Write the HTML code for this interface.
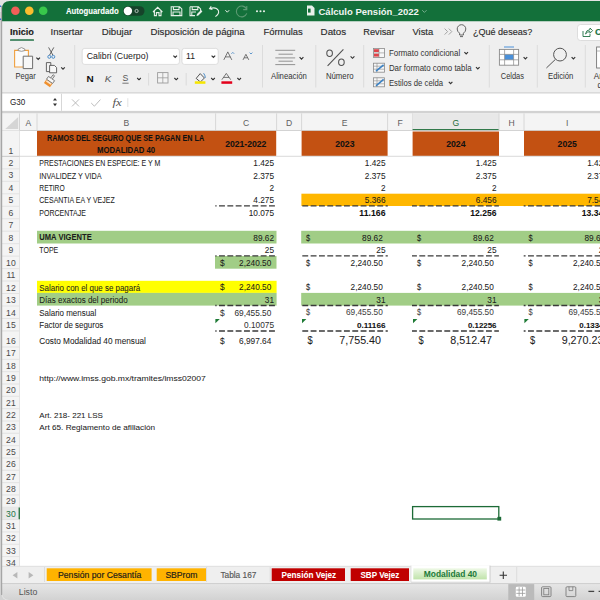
<!DOCTYPE html>
<html><head><meta charset="utf-8"><style>
html,body{margin:0;padding:0;width:600px;height:600px;overflow:hidden;background:#d2d2d2;}
svg{display:block;}
</style></head><body>
<svg width="600" height="600" viewBox="0 0 600 600">
<rect x="0.00" y="0.00" width="600.00" height="600.00" fill="#d2d2d2" />
<rect x="0.00" y="0.00" width="600.00" height="12.00" fill="#e4e4e4" />
<rect x="0.00" y="5.50" width="1.20" height="1.50" fill="#3b6fd8" />
<rect x="0.00" y="18.50" width="1.20" height="1.50" fill="#3b6fd8" />
<path d="M2,9 Q2,1 10,1 L600,1 L600,600 L8,600 Q2,600 2,594 Z" stroke="none" fill="#efefef" stroke-width="1" />
<path d="M2,9 Q2,1 10,1 L600,1 L600,21.3 L2,21.3 Z" stroke="none" fill="#13703a" stroke-width="1" />
<circle cx="15.4" cy="10.7" r="4.3" fill="#f25f58"/>
<circle cx="29.3" cy="10.7" r="4.3" fill="#fbbd2e"/>
<circle cx="43.2" cy="10.7" r="4.3" fill="#38c84b"/>
<text x="66.00" y="14.20" font-size="8.6" font-weight="bold" textLength="52.60" lengthAdjust="spacingAndGlyphs" fill="#ffffff" stroke="#ffffff" stroke-width="0.1" font-family="Liberation Sans" >Autoguardado</text>
<rect x="123.00" y="6.20" width="21.50" height="9.60" fill="#16432a" rx="4.8" />
<circle cx="127.9" cy="11" r="4.2" fill="#ffffff"/>
<circle cx="136.6" cy="11" r="1.6" fill="none" stroke="#cfd8d2" stroke-width="0.8"/>
<path d="M153,12 L157.7,7.3 L162.4,12 M154.4,10.8 L154.4,15.6 L156.4,15.6 L156.4,12.6 L159,12.6 L159,15.6 L161,15.6 L161,10.8" stroke="#e8f0ea" fill="none" stroke-width="1.1" />
<path d="M171.2,6.8 L179.6,6.8 L181.8,9 L181.8,15.6 L171.2,15.6 Z M173.4,6.8 L173.4,9.6 L179,9.6 L179,6.8 M173,15.6 L173,12 L180,12 L180,15.6" stroke="#e8f0ea" fill="none" stroke-width="1.05" />
<path d="M190,6.8 L198.4,6.8 L200.6,9 L200.6,11.5 M190,6.8 L190,15.6 L195,15.6 M192.2,6.8 L192.2,9.6 L197.8,9.6 L197.8,6.8 M191.8,15.6 L191.8,12 L196,12" stroke="#e8f0ea" fill="none" stroke-width="1.05" />
<path d="M196.5,16 L197,14 L201,10 L202.4,11.4 L198.4,15.4 Z" stroke="none" fill="#e8f0ea" stroke-width="1" />
<path d="M211.2,6.2 L209.6,8.6 L212.4,9.6 M209.8,8.6 Q216,6.4 218.4,10.6 Q219.6,13.6 215.4,16.6" stroke="#e8f0ea" fill="none" stroke-width="1.1" />
<path d="M225.4,10.2 L227.3,12.2 L229.2,10.2" stroke="#e8f0ea" fill="none" stroke-width="1" />
<path d="M246.6,9 A5.4,5.4 0 1 0 246.8,13.4 M246.8,6 L246.8,9.6 L243.2,9.6" stroke="#5d9a73" fill="none" stroke-width="1.1" />
<circle cx="257" cy="11.2" r="1.05" fill="#e8f0ea"/>
<circle cx="260.5" cy="11.2" r="1.05" fill="#e8f0ea"/>
<circle cx="264" cy="11.2" r="1.05" fill="#e8f0ea"/>
<path d="M307,5.5 L312,5.5 L314.5,8 L314.5,15.5 L307,15.5 Z" stroke="none" fill="#e8f0ea" stroke-width="1" />
<path d="M308,8.6 L310.6,8.6 L310.6,12.6 L308,12.6 Z" stroke="none" fill="#13703a" stroke-width="1" />
<text x="318.50" y="14.70" font-size="9.6" font-weight="bold" textLength="100.30" lengthAdjust="spacingAndGlyphs" fill="#f1f5f2" font-family="Liberation Sans" >Cálculo Pensión_2022</text>
<path d="M422.2,10.2 L424.4,12.4 L426.6,10.2" stroke="#7fb394" fill="none" stroke-width="0.9" />
<text x="10.00" y="35.20" font-size="9.3" font-weight="bold" textLength="23.90" lengthAdjust="spacingAndGlyphs" fill="#1b1b1b" stroke="#1b1b1b" stroke-width="0.14" font-family="Liberation Sans" >Inicio</text>
<rect x="10.00" y="39.20" width="24.00" height="1.60" fill="#207245" rx="0.6" />
<text x="50.50" y="35.20" font-size="9.3" textLength="32.50" lengthAdjust="spacingAndGlyphs" fill="#2b2b2b" stroke="#2b2b2b" stroke-width="0.14" font-family="Liberation Sans" >Insertar</text>
<text x="101.70" y="35.20" font-size="9.3" textLength="30.50" lengthAdjust="spacingAndGlyphs" fill="#2b2b2b" stroke="#2b2b2b" stroke-width="0.14" font-family="Liberation Sans" >Dibujar</text>
<text x="150.50" y="35.20" font-size="9.3" textLength="94.20" lengthAdjust="spacingAndGlyphs" fill="#2b2b2b" stroke="#2b2b2b" stroke-width="0.14" font-family="Liberation Sans" >Disposición de página</text>
<text x="263.40" y="35.20" font-size="9.3" textLength="39.30" lengthAdjust="spacingAndGlyphs" fill="#2b2b2b" stroke="#2b2b2b" stroke-width="0.14" font-family="Liberation Sans" >Fórmulas</text>
<text x="320.60" y="35.20" font-size="9.3" textLength="25.60" lengthAdjust="spacingAndGlyphs" fill="#2b2b2b" stroke="#2b2b2b" stroke-width="0.14" font-family="Liberation Sans" >Datos</text>
<text x="363.20" y="35.20" font-size="9.3" textLength="31.40" lengthAdjust="spacingAndGlyphs" fill="#2b2b2b" stroke="#2b2b2b" stroke-width="0.14" font-family="Liberation Sans" >Revisar</text>
<text x="412.50" y="35.20" font-size="9.3" textLength="20.70" lengthAdjust="spacingAndGlyphs" fill="#2b2b2b" stroke="#2b2b2b" stroke-width="0.14" font-family="Liberation Sans" >Vista</text>
<path d="M444.6,28.6 L447.6,31.6 L444.6,34.6 M448.8,28.6 L451.8,31.6 L448.8,34.6" stroke="#9a9a9a" fill="none" stroke-width="0.9" />
<path d="M459.6,35 L459.6,33.2 Q457.2,31.6 457.2,29 A4.3,4.3 0 0 1 465.8,29 Q465.8,31.6 463.4,33.2 L463.4,35 Z M460,36.6 L463,36.6" stroke="#555" fill="none" stroke-width="0.9" />
<text x="472.90" y="35.20" font-size="9.3" textLength="59.40" lengthAdjust="spacingAndGlyphs" fill="#2b2b2b" stroke="#2b2b2b" stroke-width="0.14" font-family="Liberation Sans" >¿Qué deseas?</text>
<rect x="577.50" y="24.50" width="40.00" height="16.00" fill="#ffffff" rx="3" stroke="#d5d5d5" stroke-width="0.8" />
<path d="M583,31 L583,36.5 L590,36.5 L590,34 M585.5,34 Q586,30 590,29.6 L590,28 L592.6,30.6 L590,33.2 L590,31.6 Q587,31.6 585.5,34" stroke="#207245" fill="none" stroke-width="0.9" />
<text x="595.00" y="35.40" font-size="9.3" font-weight="bold" fill="#207245" stroke="#207245" stroke-width="0.14" font-family="Liberation Sans" >C</text>
<line x1="74.70" y1="45.00" x2="74.70" y2="87.50" stroke="#d9d9d9" stroke-width="0.9" />
<line x1="262.50" y1="45.00" x2="262.50" y2="87.50" stroke="#d9d9d9" stroke-width="0.9" />
<line x1="315.80" y1="45.00" x2="315.80" y2="87.50" stroke="#d9d9d9" stroke-width="0.9" />
<line x1="363.70" y1="45.00" x2="363.70" y2="87.50" stroke="#d9d9d9" stroke-width="0.9" />
<line x1="489.30" y1="45.00" x2="489.30" y2="87.50" stroke="#d9d9d9" stroke-width="0.9" />
<line x1="537.30" y1="45.00" x2="537.30" y2="87.50" stroke="#d9d9d9" stroke-width="0.9" />
<line x1="585.30" y1="45.00" x2="585.30" y2="87.50" stroke="#d9d9d9" stroke-width="0.9" />
<path d="M14.6,50.4 L28.4,50.4 L28.4,67 L14.6,67 Z" stroke="#f0a040" fill="#fbfbfb" stroke-width="1.1" />
<path d="M18.2,50.6 L18.2,49 Q21.5,46.2 24.8,49 L24.8,50.6 Q21.5,52 18.2,50.6" stroke="#8a8a8a" fill="#fbfbfb" stroke-width="0.9" />
<path d="M23.2,56.2 L32.6,56.2 L32.6,68.6 L23.2,68.6 Z" stroke="#6f6f6f" fill="#f7f7f7" stroke-width="1" />
<path d="M36.4,57.6 L38.2,59.4 L40,57.6" stroke="#333" fill="none" stroke-width="1.15" />
<text x="15.60" y="78.50" font-size="8.2" textLength="20.10" lengthAdjust="spacingAndGlyphs" fill="#333" font-family="Liberation Sans" >Pegar</text>
<path d="M48.6,47.4 L52.8,55 M53.8,47.4 L49.6,55" stroke="#555" fill="none" stroke-width="0.9" />
<circle cx="49.3" cy="56.8" r="1.5" fill="none" stroke="#3b82c4" stroke-width="0.9"/>
<circle cx="53.3" cy="56.8" r="1.5" fill="none" stroke="#3b82c4" stroke-width="0.9"/>
<path d="M46.4,62.6 L50.8,62.6 L50.8,71.6 L46.4,71.6 Z" stroke="#555" fill="#f3f3f3" stroke-width="0.9" />
<path d="M49.6,65.4 L54.4,65.4 L56.6,67.6 L56.6,72.8 L49.6,72.8 Z" stroke="#555" fill="#f7f7f7" stroke-width="0.9" />
<path d="M61.2,67.4 L63,69.2 L64.8,67.4" stroke="#333" fill="none" stroke-width="1.15" />
<g transform="translate(50.8,82.2) rotate(35)"><path d="M-5.2,0 L2.2,0 L2.2,4.6 L-5.2,4.6 Z" fill="#f0902e"/><path d="M-4.4,0.4 L1.4,0.4 L1.4,2.2 L-4.4,2.2 Z" fill="#fbe3c8"/><path d="M-5.2,-3.4 L2.2,-3.4 L2.2,0 L-5.2,0 Z" fill="#f7f7f7" stroke="#6a6a6a" stroke-width="0.8"/><path d="M-2.4,-3.4 L-2.4,-7.4 L-0.6,-7.4 L-0.6,-3.4" fill="#f7f7f7" stroke="#6a6a6a" stroke-width="0.8"/></g>
<rect x="82.20" y="48.40" width="97.20" height="16.00" fill="#ffffff" rx="2.5" stroke="#d3d3d3" stroke-width="0.7" />
<text x="86.70" y="59.40" font-size="8.6" textLength="61.80" lengthAdjust="spacingAndGlyphs" fill="#222" font-family="Liberation Sans" >Calibri (Cuerpo)</text>
<path d="M173.4,55.6 L175.2,57.4 L177,55.6" stroke="#333" fill="none" stroke-width="1.15" />
<rect x="182.00" y="48.40" width="36.20" height="16.00" fill="#ffffff" rx="2.5" stroke="#d3d3d3" stroke-width="0.7" />
<text x="186.00" y="59.40" font-size="8.6" fill="#222" font-family="Liberation Sans" >11</text>
<path d="M211.6,55.6 L213.4,57.4 L215.2,55.6" stroke="#333" fill="none" stroke-width="1.15" />
<path d="M223.8,59.9 L227.8,51.9 L231.8,59.9 M225.3,56.9 L230.3,56.9" stroke="#555" fill="none" stroke-width="0.8" />
<path d="M231.4,53.8 L232.8,52.4 L234.2,53.8" stroke="#3b82c4" fill="none" stroke-width="0.8" />
<path d="M243,59.9 L245.9,54.3 L248.8,59.9 M244.1,57.8 L247.7,57.8" stroke="#555" fill="none" stroke-width="0.8" />
<path d="M249.6,52.6 L251,54 L252.4,52.6" stroke="#3b82c4" fill="none" stroke-width="0.8" />
<text x="86.60" y="81.60" font-size="9.4" font-weight="bold" textLength="7.20" lengthAdjust="spacingAndGlyphs" fill="#111" font-family="Liberation Sans" >N</text>
<text x="104.80" y="81.60" font-size="9.4" textLength="6.60" lengthAdjust="spacingAndGlyphs" fill="#555" font-family="Liberation Sans" font-style="italic">K</text>
<text x="122.60" y="80.60" font-size="9.0" textLength="5.80" lengthAdjust="spacingAndGlyphs" fill="#555" font-family="Liberation Sans" >S</text>
<line x1="122.40" y1="83.20" x2="128.60" y2="83.20" stroke="#555" stroke-width="0.8" />
<path d="M137.2,78 L139,79.8 L140.8,78" stroke="#333" fill="none" stroke-width="1.15" />
<line x1="148.60" y1="73.00" x2="148.60" y2="85.50" stroke="#d9d9d9" stroke-width="0.9" />
<rect x="157.60" y="72.60" width="10.40" height="10.40" fill="#f3f3f3" stroke="#9c9c9c" stroke-width="0.9" />
<line x1="162.80" y1="72.60" x2="162.80" y2="83.00" stroke="#9c9c9c" stroke-width="0.8" />
<line x1="157.60" y1="77.80" x2="168.00" y2="77.80" stroke="#9c9c9c" stroke-width="0.8" />
<path d="M174.4,78 L176.2,79.8 L178,78" stroke="#333" fill="none" stroke-width="1.15" />
<line x1="186.20" y1="73.00" x2="186.20" y2="85.50" stroke="#d9d9d9" stroke-width="0.9" />
<path d="M196.2,78.4 L200.2,73.6 L204.4,78 L200.4,82 Z" stroke="#444" fill="#f3f3f3" stroke-width="0.9" />
<path d="M203.6,73.2 Q205.6,76 205.2,78" stroke="#3b82c4" fill="none" stroke-width="0.9" />
<rect x="194.80" y="81.30" width="10.60" height="2.50" fill="#f6e600" />
<path d="M211.2,78 L213,79.8 L214.8,78" stroke="#333" fill="none" stroke-width="1.15" />
<path d="M221.9,79.7 L226.3,73.4 L230.7,79.7 M223.5,77.4 L229.1,77.4" stroke="#555" fill="none" stroke-width="0.8" />
<rect x="221.40" y="81.30" width="10.80" height="2.50" fill="#e3001b" />
<path d="M237.4,78 L239.2,79.8 L241,78" stroke="#333" fill="none" stroke-width="1.15" />
<line x1="275.30" y1="50.30" x2="295.20" y2="50.30" stroke="#888" stroke-width="0.9" />
<line x1="278.50" y1="54.20" x2="292.80" y2="54.20" stroke="#888" stroke-width="0.9" />
<line x1="275.30" y1="57.90" x2="295.20" y2="57.90" stroke="#888" stroke-width="0.9" />
<line x1="278.50" y1="61.20" x2="292.80" y2="61.20" stroke="#888" stroke-width="0.9" />
<line x1="275.30" y1="64.60" x2="295.20" y2="64.60" stroke="#888" stroke-width="0.9" />
<path d="M299.6,57.2 L301.5,59.1 L303.4,57.2" stroke="#333" fill="none" stroke-width="1.15" />
<text x="271.00" y="78.80" font-size="8.2" textLength="35.80" lengthAdjust="spacingAndGlyphs" fill="#333" font-family="Liberation Sans" >Alineación</text>
<ellipse cx="329.6" cy="53.2" rx="2.8" ry="3.2" fill="none" stroke="#505050" stroke-width="1.05"/>
<ellipse cx="341.4" cy="62.2" rx="2.8" ry="3.2" fill="none" stroke="#505050" stroke-width="1.05"/>
<line x1="343.40" y1="49.40" x2="327.60" y2="65.80" stroke="#505050" stroke-width="1.05" />
<path d="M350.6,56.4 L352.5,58.3 L354.4,56.4" stroke="#333" fill="none" stroke-width="1.15" />
<text x="325.90" y="78.80" font-size="8.2" textLength="27.70" lengthAdjust="spacingAndGlyphs" fill="#333" font-family="Liberation Sans" >Número</text>
<rect x="373.40" y="48.40" width="11.00" height="9.00" fill="#f7f7f7" stroke="#8a8a8a" stroke-width="0.8" />
<rect x="374.00" y="49.20" width="5.00" height="2.80" fill="#e0444a" />
<rect x="374.00" y="53.60" width="5.00" height="3.00" fill="#e0444a" />
<line x1="373.40" y1="52.90" x2="384.40" y2="52.90" stroke="#8a8a8a" stroke-width="0.6" />
<line x1="379.00" y1="48.40" x2="379.00" y2="57.40" stroke="#8a8a8a" stroke-width="0.6" />
<rect x="373.40" y="63.20" width="11.00" height="9.00" fill="#f7f7f7" stroke="#8a8a8a" stroke-width="0.8" />
<line x1="373.40" y1="66.20" x2="384.40" y2="66.20" stroke="#8a8a8a" stroke-width="0.6" />
<line x1="373.40" y1="69.20" x2="384.40" y2="69.20" stroke="#8a8a8a" stroke-width="0.6" />
<line x1="377.00" y1="63.20" x2="377.00" y2="72.20" stroke="#8a8a8a" stroke-width="0.6" />
<path d="M376,71.2 L383.6,64.8" stroke="#3b82c4" fill="none" stroke-width="1.6" />
<rect x="373.40" y="77.80" width="11.00" height="9.00" fill="#f7f7f7" stroke="#8a8a8a" stroke-width="0.8" />
<line x1="373.40" y1="80.80" x2="384.40" y2="80.80" stroke="#8a8a8a" stroke-width="0.6" />
<line x1="373.40" y1="83.80" x2="384.40" y2="83.80" stroke="#8a8a8a" stroke-width="0.6" />
<line x1="377.00" y1="77.80" x2="377.00" y2="86.80" stroke="#8a8a8a" stroke-width="0.6" />
<path d="M376,85.8 L383.6,79.39999999999999" stroke="#3b82c4" fill="none" stroke-width="1.6" />
<text x="388.90" y="55.80" font-size="8.2" textLength="71.30" lengthAdjust="spacingAndGlyphs" fill="#333" font-family="Liberation Sans" >Formato condicional</text>
<path d="M464.4,52.2 L466.2,54 L468,52.2" stroke="#333" fill="none" stroke-width="1.15" />
<text x="388.90" y="71.00" font-size="8.2" textLength="82.70" lengthAdjust="spacingAndGlyphs" fill="#333" font-family="Liberation Sans" >Dar formato como tabla</text>
<path d="M476,67.2 L477.8,69 L479.6,67.2" stroke="#333" fill="none" stroke-width="1.15" />
<text x="388.90" y="85.80" font-size="8.2" textLength="54.10" lengthAdjust="spacingAndGlyphs" fill="#333" font-family="Liberation Sans" >Estilos de celda</text>
<path d="M448.8,81.8 L450.6,83.6 L452.4,81.8" stroke="#333" fill="none" stroke-width="1.15" />
<rect x="499.40" y="49.40" width="19.20" height="15.80" fill="#ffffff" stroke="#8a8a8a" stroke-width="0.9" />
<rect x="504.60" y="54.40" width="9.00" height="5.40" fill="#4a90d9" />
<line x1="499.40" y1="54.40" x2="518.60" y2="54.40" stroke="#8a8a8a" stroke-width="0.7" />
<line x1="499.40" y1="59.80" x2="518.60" y2="59.80" stroke="#8a8a8a" stroke-width="0.7" />
<line x1="504.60" y1="49.40" x2="504.60" y2="65.20" stroke="#8a8a8a" stroke-width="0.7" />
<line x1="513.60" y1="49.40" x2="513.60" y2="65.20" stroke="#8a8a8a" stroke-width="0.7" />
<line x1="504.00" y1="47.00" x2="514.00" y2="47.00" stroke="#4a90d9" stroke-width="1" />
<path d="M523.6,57.2 L525.4,59 L527.2,57.2" stroke="#333" fill="none" stroke-width="1.15" />
<text x="500.80" y="78.80" font-size="8.2" textLength="23.20" lengthAdjust="spacingAndGlyphs" fill="#333" font-family="Liberation Sans" >Celdas</text>
<circle cx="560" cy="54.6" r="6.4" fill="none" stroke="#555" stroke-width="1"/>
<line x1="555.40" y1="59.40" x2="546.40" y2="68.00" stroke="#555" stroke-width="1" />
<path d="M571.6,57.2 L573.4,59 L575.2,57.2" stroke="#333" fill="none" stroke-width="1.15" />
<text x="548.00" y="78.80" font-size="8.2" textLength="25.30" lengthAdjust="spacingAndGlyphs" fill="#333" font-family="Liberation Sans" >Edición</text>
<rect x="596.60" y="47.00" width="14.00" height="21.00" fill="#ffffff" stroke="#777" stroke-width="0.9" />
<line x1="596.60" y1="51.00" x2="604.00" y2="51.00" stroke="#999" stroke-width="0.7" />
<text x="593.80" y="78.80" font-size="8.2" fill="#333" font-family="Liberation Sans" >An</text>
<text x="597.40" y="87.60" font-size="8.2" fill="#333" font-family="Liberation Sans" >d</text>
<rect x="2.00" y="92.00" width="598.00" height="1.70" fill="#dadada" />
<rect x="2.00" y="93.70" width="598.00" height="17.20" fill="#ffffff" />
<line x1="61.50" y1="93.70" x2="61.50" y2="110.90" stroke="#d3d3d3" stroke-width="0.9" />
<text x="9.90" y="104.80" font-size="8.4" textLength="15.30" lengthAdjust="spacingAndGlyphs" fill="#222" font-family="Liberation Sans" >G30</text>
<path d="M53,100.6 L55,98 L57,100.6 Z M53,103.6 L55,106.2 L57,103.6 Z" stroke="none" fill="#333" stroke-width="1" />
<path d="M72,99.4 L79,106.4 M79,99.4 L72,106.4" stroke="#b4b4b4" fill="none" stroke-width="0.9" />
<path d="M91.2,103 L94.4,106.2 L100.4,99.6" stroke="#b4b4b4" fill="none" stroke-width="0.9" />
<text x="112.40" y="106.00" font-size="10.4" textLength="9.40" lengthAdjust="spacingAndGlyphs" fill="#555" font-family="Liberation Serif" font-style="italic">fx</text>
<line x1="127.80" y1="98.20" x2="127.80" y2="107.00" stroke="#dadada" stroke-width="0.8" />
<rect x="2.00" y="110.90" width="598.00" height="2.50" fill="#d2d2d2" />
<rect x="19.50" y="130.50" width="580.50" height="435.50" fill="#ffffff" />
<rect x="2.00" y="113.40" width="598.00" height="17.10" fill="#f4f4f4" />
<line x1="37.00" y1="113.40" x2="37.00" y2="130.50" stroke="#d4d4d4" stroke-width="0.9" />
<text x="28.25" y="125.50" font-size="8.6" text-anchor="middle" fill="#606060" font-family="Liberation Sans" >A</text>
<line x1="215.60" y1="113.40" x2="215.60" y2="130.50" stroke="#d4d4d4" stroke-width="0.9" />
<text x="126.30" y="125.50" font-size="8.6" text-anchor="middle" fill="#606060" font-family="Liberation Sans" >B</text>
<line x1="276.60" y1="113.40" x2="276.60" y2="130.50" stroke="#d4d4d4" stroke-width="0.9" />
<text x="246.10" y="125.50" font-size="8.6" text-anchor="middle" fill="#606060" font-family="Liberation Sans" >C</text>
<line x1="301.60" y1="113.40" x2="301.60" y2="130.50" stroke="#d4d4d4" stroke-width="0.9" />
<text x="289.10" y="125.50" font-size="8.6" text-anchor="middle" fill="#606060" font-family="Liberation Sans" >D</text>
<line x1="387.60" y1="113.40" x2="387.60" y2="130.50" stroke="#d4d4d4" stroke-width="0.9" />
<text x="344.60" y="125.50" font-size="8.6" text-anchor="middle" fill="#606060" font-family="Liberation Sans" >E</text>
<line x1="412.60" y1="113.40" x2="412.60" y2="130.50" stroke="#d4d4d4" stroke-width="0.9" />
<text x="400.10" y="125.50" font-size="8.6" text-anchor="middle" fill="#606060" font-family="Liberation Sans" >F</text>
<rect x="412.60" y="113.40" width="86.40" height="17.10" fill="#e8e8e8" />
<rect x="412.60" y="129.10" width="86.40" height="1.80" fill="#1d6d39" />
<line x1="499.00" y1="113.40" x2="499.00" y2="130.50" stroke="#d4d4d4" stroke-width="0.9" />
<text x="455.80" y="125.50" font-size="8.6" text-anchor="middle" fill="#1d6d39" font-family="Liberation Sans" >G</text>
<line x1="524.00" y1="113.40" x2="524.00" y2="130.50" stroke="#d4d4d4" stroke-width="0.9" />
<text x="511.50" y="125.50" font-size="8.6" text-anchor="middle" fill="#606060" font-family="Liberation Sans" >H</text>
<line x1="610.40" y1="113.40" x2="610.40" y2="130.50" stroke="#d4d4d4" stroke-width="0.9" />
<text x="567.20" y="125.50" font-size="8.6" text-anchor="middle" fill="#606060" font-family="Liberation Sans" >I</text>
<line x1="2.00" y1="130.50" x2="600.00" y2="130.50" stroke="#cfcfcf" stroke-width="0.9" />
<line x1="19.50" y1="113.40" x2="19.50" y2="566.00" stroke="#cfcfcf" stroke-width="0.9" />
<path d="M5.2,129 L18.2,129 L18.2,117 Z" stroke="none" fill="#d5d5d5" stroke-width="1" />
<rect x="2.00" y="130.50" width="17.50" height="435.50" fill="#f4f4f4" />
<line x1="2.00" y1="156.40" x2="19.50" y2="156.40" stroke="#dedede" stroke-width="0.8" />
<text x="10.90" y="153.60" font-size="8.6" text-anchor="middle" fill="#4a4a4a" font-family="Liberation Sans" >1</text>
<line x1="2.00" y1="168.86" x2="19.50" y2="168.86" stroke="#dedede" stroke-width="0.8" />
<text x="10.90" y="165.96" font-size="8.6" text-anchor="middle" fill="#4a4a4a" font-family="Liberation Sans" >2</text>
<line x1="2.00" y1="181.33" x2="19.50" y2="181.33" stroke="#dedede" stroke-width="0.8" />
<text x="10.90" y="178.43" font-size="8.6" text-anchor="middle" fill="#4a4a4a" font-family="Liberation Sans" >3</text>
<line x1="2.00" y1="193.79" x2="19.50" y2="193.79" stroke="#dedede" stroke-width="0.8" />
<text x="10.90" y="190.89" font-size="8.6" text-anchor="middle" fill="#4a4a4a" font-family="Liberation Sans" >4</text>
<line x1="2.00" y1="206.26" x2="19.50" y2="206.26" stroke="#dedede" stroke-width="0.8" />
<text x="10.90" y="203.36" font-size="8.6" text-anchor="middle" fill="#4a4a4a" font-family="Liberation Sans" >5</text>
<line x1="2.00" y1="218.72" x2="19.50" y2="218.72" stroke="#dedede" stroke-width="0.8" />
<text x="10.90" y="215.82" font-size="8.6" text-anchor="middle" fill="#4a4a4a" font-family="Liberation Sans" >6</text>
<line x1="2.00" y1="231.19" x2="19.50" y2="231.19" stroke="#dedede" stroke-width="0.8" />
<text x="10.90" y="228.29" font-size="8.6" text-anchor="middle" fill="#4a4a4a" font-family="Liberation Sans" >7</text>
<line x1="2.00" y1="243.65" x2="19.50" y2="243.65" stroke="#dedede" stroke-width="0.8" />
<text x="10.90" y="240.75" font-size="8.6" text-anchor="middle" fill="#4a4a4a" font-family="Liberation Sans" >8</text>
<line x1="2.00" y1="256.11" x2="19.50" y2="256.11" stroke="#dedede" stroke-width="0.8" />
<text x="10.90" y="253.21" font-size="8.6" text-anchor="middle" fill="#4a4a4a" font-family="Liberation Sans" >9</text>
<line x1="2.00" y1="268.58" x2="19.50" y2="268.58" stroke="#dedede" stroke-width="0.8" />
<text x="10.90" y="265.68" font-size="8.6" text-anchor="middle" fill="#4a4a4a" font-family="Liberation Sans" >10</text>
<line x1="2.00" y1="281.04" x2="19.50" y2="281.04" stroke="#dedede" stroke-width="0.8" />
<text x="10.90" y="278.14" font-size="8.6" text-anchor="middle" fill="#4a4a4a" font-family="Liberation Sans" >11</text>
<line x1="2.00" y1="293.51" x2="19.50" y2="293.51" stroke="#dedede" stroke-width="0.8" />
<text x="10.90" y="290.61" font-size="8.6" text-anchor="middle" fill="#4a4a4a" font-family="Liberation Sans" >12</text>
<line x1="2.00" y1="305.97" x2="19.50" y2="305.97" stroke="#dedede" stroke-width="0.8" />
<text x="10.90" y="303.07" font-size="8.6" text-anchor="middle" fill="#4a4a4a" font-family="Liberation Sans" >13</text>
<line x1="2.00" y1="318.44" x2="19.50" y2="318.44" stroke="#dedede" stroke-width="0.8" />
<text x="10.90" y="315.54" font-size="8.6" text-anchor="middle" fill="#4a4a4a" font-family="Liberation Sans" >14</text>
<line x1="2.00" y1="330.90" x2="19.50" y2="330.90" stroke="#dedede" stroke-width="0.8" />
<text x="10.90" y="328.00" font-size="8.6" text-anchor="middle" fill="#4a4a4a" font-family="Liberation Sans" >15</text>
<line x1="2.00" y1="347.00" x2="19.50" y2="347.00" stroke="#dedede" stroke-width="0.8" />
<text x="10.90" y="344.10" font-size="8.6" text-anchor="middle" fill="#4a4a4a" font-family="Liberation Sans" >16</text>
<line x1="2.00" y1="359.33" x2="19.50" y2="359.33" stroke="#dedede" stroke-width="0.8" />
<text x="10.90" y="356.43" font-size="8.6" text-anchor="middle" fill="#4a4a4a" font-family="Liberation Sans" >17</text>
<line x1="2.00" y1="371.66" x2="19.50" y2="371.66" stroke="#dedede" stroke-width="0.8" />
<text x="10.90" y="368.76" font-size="8.6" text-anchor="middle" fill="#4a4a4a" font-family="Liberation Sans" >18</text>
<line x1="2.00" y1="383.99" x2="19.50" y2="383.99" stroke="#dedede" stroke-width="0.8" />
<text x="10.90" y="381.09" font-size="8.6" text-anchor="middle" fill="#4a4a4a" font-family="Liberation Sans" >19</text>
<line x1="2.00" y1="396.32" x2="19.50" y2="396.32" stroke="#dedede" stroke-width="0.8" />
<text x="10.90" y="393.42" font-size="8.6" text-anchor="middle" fill="#4a4a4a" font-family="Liberation Sans" >20</text>
<line x1="2.00" y1="408.65" x2="19.50" y2="408.65" stroke="#dedede" stroke-width="0.8" />
<text x="10.90" y="405.75" font-size="8.6" text-anchor="middle" fill="#4a4a4a" font-family="Liberation Sans" >21</text>
<line x1="2.00" y1="420.98" x2="19.50" y2="420.98" stroke="#dedede" stroke-width="0.8" />
<text x="10.90" y="418.08" font-size="8.6" text-anchor="middle" fill="#4a4a4a" font-family="Liberation Sans" >22</text>
<line x1="2.00" y1="433.31" x2="19.50" y2="433.31" stroke="#dedede" stroke-width="0.8" />
<text x="10.90" y="430.41" font-size="8.6" text-anchor="middle" fill="#4a4a4a" font-family="Liberation Sans" >23</text>
<line x1="2.00" y1="445.64" x2="19.50" y2="445.64" stroke="#dedede" stroke-width="0.8" />
<text x="10.90" y="442.74" font-size="8.6" text-anchor="middle" fill="#4a4a4a" font-family="Liberation Sans" >24</text>
<line x1="2.00" y1="457.97" x2="19.50" y2="457.97" stroke="#dedede" stroke-width="0.8" />
<text x="10.90" y="455.07" font-size="8.6" text-anchor="middle" fill="#4a4a4a" font-family="Liberation Sans" >25</text>
<line x1="2.00" y1="470.30" x2="19.50" y2="470.30" stroke="#dedede" stroke-width="0.8" />
<text x="10.90" y="467.40" font-size="8.6" text-anchor="middle" fill="#4a4a4a" font-family="Liberation Sans" >26</text>
<line x1="2.00" y1="482.63" x2="19.50" y2="482.63" stroke="#dedede" stroke-width="0.8" />
<text x="10.90" y="479.73" font-size="8.6" text-anchor="middle" fill="#4a4a4a" font-family="Liberation Sans" >27</text>
<line x1="2.00" y1="494.96" x2="19.50" y2="494.96" stroke="#dedede" stroke-width="0.8" />
<text x="10.90" y="492.06" font-size="8.6" text-anchor="middle" fill="#4a4a4a" font-family="Liberation Sans" >28</text>
<line x1="2.00" y1="507.29" x2="19.50" y2="507.29" stroke="#dedede" stroke-width="0.8" />
<text x="10.90" y="504.39" font-size="8.6" text-anchor="middle" fill="#4a4a4a" font-family="Liberation Sans" >29</text>
<rect x="2.00" y="507.29" width="17.50" height="12.33" fill="#e8e8e8" />
<rect x="18.60" y="507.49" width="1.30" height="11.93" fill="#1d6d39" />
<line x1="2.00" y1="519.62" x2="19.50" y2="519.62" stroke="#dedede" stroke-width="0.8" />
<text x="10.90" y="516.72" font-size="8.6" text-anchor="middle" fill="#217346" font-family="Liberation Sans" >30</text>
<line x1="2.00" y1="531.95" x2="19.50" y2="531.95" stroke="#dedede" stroke-width="0.8" />
<text x="10.90" y="529.05" font-size="8.6" text-anchor="middle" fill="#4a4a4a" font-family="Liberation Sans" >31</text>
<line x1="2.00" y1="544.28" x2="19.50" y2="544.28" stroke="#dedede" stroke-width="0.8" />
<text x="10.90" y="541.38" font-size="8.6" text-anchor="middle" fill="#4a4a4a" font-family="Liberation Sans" >32</text>
<line x1="2.00" y1="556.61" x2="19.50" y2="556.61" stroke="#dedede" stroke-width="0.8" />
<text x="10.90" y="553.71" font-size="8.6" text-anchor="middle" fill="#4a4a4a" font-family="Liberation Sans" >33</text>
<text x="10.90" y="566.01" font-size="8.6" text-anchor="middle" fill="#4a4a4a" font-family="Liberation Sans" >34</text>
<line x1="2.00" y1="156.40" x2="19.50" y2="156.40" stroke="#c8c8c8" stroke-width="0.9" />
<rect x="37.00" y="130.90" width="239.20" height="25.00" fill="#c35112" />
<rect x="301.60" y="130.90" width="86.00" height="25.00" fill="#c35112" />
<rect x="412.60" y="131.50" width="86.40" height="24.40" fill="#c35112" />
<rect x="524.00" y="130.90" width="76.00" height="25.00" fill="#c35112" />
<line x1="19.50" y1="156.30" x2="600.00" y2="156.30" stroke="#d0d0d0" stroke-width="0.8" />
<rect x="301.40" y="193.70" width="298.60" height="12.30" fill="#ffb700" />
<rect x="37.00" y="230.80" width="239.50" height="12.70" fill="#a1cd86" />
<rect x="301.20" y="230.80" width="298.80" height="12.70" fill="#a1cd86" />
<rect x="215.00" y="256.00" width="61.50" height="12.70" fill="#a1cd86" />
<rect x="37.00" y="280.80" width="239.60" height="12.10" fill="#ffff00" />
<rect x="37.00" y="292.90" width="239.60" height="12.70" fill="#a1cd86" />
<rect x="301.20" y="292.90" width="298.80" height="12.70" fill="#a1cd86" />
<line x1="215.30" y1="205.90" x2="276.40" y2="205.90" stroke="#3a3a3a" stroke-width="1.35" stroke-dasharray="5.9,2.43" stroke-dashoffset="4.6"/>
<line x1="302.30" y1="205.90" x2="387.80" y2="205.90" stroke="#3a3a3a" stroke-width="1.35" stroke-dasharray="5.9,2.43" stroke-dashoffset="0"/>
<line x1="412.00" y1="205.90" x2="498.90" y2="205.90" stroke="#3a3a3a" stroke-width="1.35" stroke-dasharray="5.9,2.43" stroke-dashoffset="1.0"/>
<line x1="523.70" y1="205.90" x2="600.00" y2="205.90" stroke="#3a3a3a" stroke-width="1.35" stroke-dasharray="5.9,2.43" stroke-dashoffset="4.03"/>
<line x1="215.30" y1="255.90" x2="276.40" y2="255.90" stroke="#3a3a3a" stroke-width="1.35" stroke-dasharray="5.9,2.43" stroke-dashoffset="4.6"/>
<line x1="302.30" y1="255.90" x2="387.80" y2="255.90" stroke="#3a3a3a" stroke-width="1.35" stroke-dasharray="5.9,2.43" stroke-dashoffset="0"/>
<line x1="412.00" y1="255.90" x2="498.90" y2="255.90" stroke="#3a3a3a" stroke-width="1.35" stroke-dasharray="5.9,2.43" stroke-dashoffset="1.0"/>
<line x1="523.70" y1="255.90" x2="600.00" y2="255.90" stroke="#3a3a3a" stroke-width="1.35" stroke-dasharray="5.9,2.43" stroke-dashoffset="4.03"/>
<line x1="215.30" y1="305.50" x2="276.40" y2="305.50" stroke="#3a3a3a" stroke-width="1.35" stroke-dasharray="5.9,2.43" stroke-dashoffset="4.6"/>
<line x1="302.30" y1="305.50" x2="387.80" y2="305.50" stroke="#3a3a3a" stroke-width="1.35" stroke-dasharray="5.9,2.43" stroke-dashoffset="0"/>
<line x1="412.00" y1="305.50" x2="498.90" y2="305.50" stroke="#3a3a3a" stroke-width="1.35" stroke-dasharray="5.9,2.43" stroke-dashoffset="1.0"/>
<line x1="523.70" y1="305.50" x2="600.00" y2="305.50" stroke="#3a3a3a" stroke-width="1.35" stroke-dasharray="5.9,2.43" stroke-dashoffset="4.03"/>
<line x1="215.30" y1="331.00" x2="276.40" y2="331.00" stroke="#3a3a3a" stroke-width="1.35" stroke-dasharray="5.9,2.43" stroke-dashoffset="4.6"/>
<line x1="302.30" y1="331.00" x2="387.80" y2="331.00" stroke="#3a3a3a" stroke-width="1.35" stroke-dasharray="5.9,2.43" stroke-dashoffset="0"/>
<line x1="412.00" y1="331.00" x2="498.90" y2="331.00" stroke="#3a3a3a" stroke-width="1.35" stroke-dasharray="5.9,2.43" stroke-dashoffset="1.0"/>
<line x1="523.70" y1="331.00" x2="600.00" y2="331.00" stroke="#3a3a3a" stroke-width="1.35" stroke-dasharray="5.9,2.43" stroke-dashoffset="4.03"/>
<text x="47.00" y="141.30" font-size="8.4" font-weight="bold" textLength="157.20" lengthAdjust="spacingAndGlyphs" fill="#111" stroke="#111" stroke-width="0.05" font-family="Liberation Sans" >RAMOS DEL SEGURO QUE SE PAGAN EN LA</text>
<text x="97.00" y="153.00" font-size="8.4" font-weight="bold" textLength="58.20" lengthAdjust="spacingAndGlyphs" fill="#111" stroke="#111" stroke-width="0.05" font-family="Liberation Sans" >MODALIDAD 40</text>
<text x="225.20" y="146.80" font-size="8.4" font-weight="bold" textLength="41.20" lengthAdjust="spacingAndGlyphs" fill="#111" stroke="#111" stroke-width="0.05" font-family="Liberation Sans" >2021-2022</text>
<text x="335.20" y="146.60" font-size="8.4" font-weight="bold" textLength="19.30" lengthAdjust="spacingAndGlyphs" fill="#111" stroke="#111" stroke-width="0.05" font-family="Liberation Sans" >2023</text>
<text x="446.20" y="146.60" font-size="8.4" font-weight="bold" textLength="19.30" lengthAdjust="spacingAndGlyphs" fill="#111" stroke="#111" stroke-width="0.05" font-family="Liberation Sans" >2024</text>
<text x="557.60" y="146.60" font-size="8.4" font-weight="bold" textLength="19.30" lengthAdjust="spacingAndGlyphs" fill="#111" stroke="#111" stroke-width="0.05" font-family="Liberation Sans" >2025</text>
<text x="39.30" y="166.30" font-size="8.4" textLength="121.00" lengthAdjust="spacingAndGlyphs" fill="#1c1c1c" stroke="#1c1c1c" stroke-width="0.05" font-family="Liberation Sans" >PRESTACIONES EN ESPECIE: E Y M</text>
<text x="39.30" y="178.60" font-size="8.4" textLength="62.40" lengthAdjust="spacingAndGlyphs" fill="#1c1c1c" stroke="#1c1c1c" stroke-width="0.05" font-family="Liberation Sans" >INVALIDEZ Y VIDA</text>
<text x="39.30" y="190.90" font-size="8.4" textLength="25.40" lengthAdjust="spacingAndGlyphs" fill="#1c1c1c" stroke="#1c1c1c" stroke-width="0.05" font-family="Liberation Sans" >RETIRO</text>
<text x="39.30" y="203.20" font-size="8.4" textLength="75.40" lengthAdjust="spacingAndGlyphs" fill="#1c1c1c" stroke="#1c1c1c" stroke-width="0.05" font-family="Liberation Sans" >CESANTIA EA Y VEJEZ</text>
<text x="39.30" y="215.70" font-size="8.4" textLength="46.50" lengthAdjust="spacingAndGlyphs" fill="#1c1c1c" stroke="#1c1c1c" stroke-width="0.05" font-family="Liberation Sans" >PORCENTAJE</text>
<text x="39.30" y="240.30" font-size="8.4" font-weight="bold" textLength="52.40" lengthAdjust="spacingAndGlyphs" fill="#1c1c1c" stroke="#1c1c1c" stroke-width="0.05" font-family="Liberation Sans" >UMA VIGENTE</text>
<text x="39.30" y="252.70" font-size="8.4" textLength="19.00" lengthAdjust="spacingAndGlyphs" fill="#1c1c1c" stroke="#1c1c1c" stroke-width="0.05" font-family="Liberation Sans" >TOPE</text>
<text x="39.30" y="290.50" font-size="8.4" textLength="100.90" lengthAdjust="spacingAndGlyphs" fill="#1c1c1c" stroke="#1c1c1c" stroke-width="0.05" font-family="Liberation Sans" >Salario con el que se pagará</text>
<text x="39.30" y="303.00" font-size="8.4" textLength="88.30" lengthAdjust="spacingAndGlyphs" fill="#1c1c1c" stroke="#1c1c1c" stroke-width="0.05" font-family="Liberation Sans" >Días exactos del periodo</text>
<text x="39.30" y="315.50" font-size="8.4" textLength="57.00" lengthAdjust="spacingAndGlyphs" fill="#1c1c1c" stroke="#1c1c1c" stroke-width="0.05" font-family="Liberation Sans" >Salario mensual</text>
<text x="39.30" y="328.10" font-size="8.4" textLength="64.00" lengthAdjust="spacingAndGlyphs" fill="#1c1c1c" stroke="#1c1c1c" stroke-width="0.05" font-family="Liberation Sans" >Factor de seguros</text>
<text x="39.30" y="343.70" font-size="8.4" textLength="106.60" lengthAdjust="spacingAndGlyphs" fill="#1c1c1c" stroke="#1c1c1c" stroke-width="0.05" font-family="Liberation Sans" >Costo Modalidad 40 mensual</text>
<text x="253.30" y="166.30" font-size="8.4" textLength="20.70" lengthAdjust="spacingAndGlyphs" fill="#1c1c1c" stroke="#1c1c1c" stroke-width="0.05" font-family="Liberation Sans" >1.425</text>
<text x="253.30" y="178.60" font-size="8.4" textLength="20.70" lengthAdjust="spacingAndGlyphs" fill="#1c1c1c" stroke="#1c1c1c" stroke-width="0.05" font-family="Liberation Sans" >2.375</text>
<text x="269.40" y="190.90" font-size="8.4" textLength="4.60" lengthAdjust="spacingAndGlyphs" fill="#1c1c1c" stroke="#1c1c1c" stroke-width="0.05" font-family="Liberation Sans" >2</text>
<text x="253.30" y="203.20" font-size="8.4" textLength="20.70" lengthAdjust="spacingAndGlyphs" fill="#1c1c1c" stroke="#1c1c1c" stroke-width="0.05" font-family="Liberation Sans" >4.275</text>
<text x="248.70" y="215.90" font-size="8.4" textLength="25.30" lengthAdjust="spacingAndGlyphs" fill="#1c1c1c" stroke="#1c1c1c" stroke-width="0.05" font-family="Liberation Sans" >10.075</text>
<text x="253.30" y="240.70" font-size="8.4" textLength="20.70" lengthAdjust="spacingAndGlyphs" fill="#1c1c1c" stroke="#1c1c1c" stroke-width="0.05" font-family="Liberation Sans" >89.62</text>
<text x="264.80" y="253.00" font-size="8.4" textLength="9.20" lengthAdjust="spacingAndGlyphs" fill="#1c1c1c" stroke="#1c1c1c" stroke-width="0.05" font-family="Liberation Sans" >25</text>
<text x="219.90" y="266.10" font-size="8.4" textLength="4.70" lengthAdjust="spacingAndGlyphs" fill="#1c1c1c" stroke="#1c1c1c" stroke-width="0.05" font-family="Liberation Sans" >$</text>
<text x="239.10" y="266.10" font-size="8.4" textLength="32.20" lengthAdjust="spacingAndGlyphs" fill="#1c1c1c" stroke="#1c1c1c" stroke-width="0.05" font-family="Liberation Sans" >2,240.50</text>
<text x="219.90" y="290.30" font-size="8.4" textLength="4.70" lengthAdjust="spacingAndGlyphs" fill="#1c1c1c" stroke="#1c1c1c" stroke-width="0.05" font-family="Liberation Sans" >$</text>
<text x="239.10" y="290.30" font-size="8.4" textLength="32.20" lengthAdjust="spacingAndGlyphs" fill="#1c1c1c" stroke="#1c1c1c" stroke-width="0.05" font-family="Liberation Sans" >2,240.50</text>
<text x="264.80" y="302.80" font-size="8.4" textLength="9.20" lengthAdjust="spacingAndGlyphs" fill="#1c1c1c" stroke="#1c1c1c" stroke-width="0.05" font-family="Liberation Sans" >31</text>
<text x="219.90" y="315.60" font-size="8.4" textLength="4.70" lengthAdjust="spacingAndGlyphs" fill="#333" stroke="#333" stroke-width="0.05" font-family="Liberation Sans" >$</text>
<text x="234.50" y="315.60" font-size="8.4" textLength="36.80" lengthAdjust="spacingAndGlyphs" fill="#333" stroke="#333" stroke-width="0.05" font-family="Liberation Sans" >69,455.50</text>
<text x="244.10" y="327.80" font-size="8.4" textLength="29.90" lengthAdjust="spacingAndGlyphs" fill="#333" stroke="#333" stroke-width="0.05" font-family="Liberation Sans" >0.10075</text>
<text x="219.90" y="343.60" font-size="8.4" textLength="4.70" lengthAdjust="spacingAndGlyphs" fill="#1c1c1c" stroke="#1c1c1c" stroke-width="0.05" font-family="Liberation Sans" >$</text>
<text x="239.10" y="343.60" font-size="8.4" textLength="32.20" lengthAdjust="spacingAndGlyphs" fill="#1c1c1c" stroke="#1c1c1c" stroke-width="0.05" font-family="Liberation Sans" >6,997.64</text>
<path d="M215.4,319.0 L219.8,319.0 L215.4,323.2 Z" stroke="none" fill="#1e7a35" stroke-width="1" />
<path d="M302.0,319.0 L306.4,319.0 L302.0,323.2 Z" stroke="none" fill="#1e7a35" stroke-width="1" />
<path d="M413.0,319.0 L417.4,319.0 L413.0,323.2 Z" stroke="none" fill="#1e7a35" stroke-width="1" />
<path d="M524.4,319.0 L528.8,319.0 L524.4,323.2 Z" stroke="none" fill="#1e7a35" stroke-width="1" />
<text x="364.80" y="166.30" font-size="8.4" textLength="20.70" lengthAdjust="spacingAndGlyphs" fill="#1c1c1c" stroke="#1c1c1c" stroke-width="0.05" font-family="Liberation Sans" >1.425</text>
<text x="364.80" y="178.60" font-size="8.4" textLength="20.70" lengthAdjust="spacingAndGlyphs" fill="#1c1c1c" stroke="#1c1c1c" stroke-width="0.05" font-family="Liberation Sans" >2.375</text>
<text x="380.90" y="190.90" font-size="8.4" textLength="4.60" lengthAdjust="spacingAndGlyphs" fill="#1c1c1c" stroke="#1c1c1c" stroke-width="0.05" font-family="Liberation Sans" >2</text>
<text x="364.80" y="203.20" font-size="8.4" textLength="20.70" lengthAdjust="spacingAndGlyphs" fill="#1c1c1c" stroke="#1c1c1c" stroke-width="0.05" font-family="Liberation Sans" >5.366</text>
<text x="359.38" y="215.70" font-size="8.4" font-weight="bold" textLength="26.12" lengthAdjust="spacingAndGlyphs" fill="#111" stroke="#111" stroke-width="0.05" font-family="Liberation Sans" >11.166</text>
<text x="306.00" y="240.50" font-size="8.4" textLength="4.20" lengthAdjust="spacingAndGlyphs" fill="#1c1c1c" stroke="#1c1c1c" stroke-width="0.05" font-family="Liberation Sans" >$</text>
<text x="362.10" y="240.50" font-size="8.4" textLength="20.70" lengthAdjust="spacingAndGlyphs" fill="#1c1c1c" stroke="#1c1c1c" stroke-width="0.05" font-family="Liberation Sans" >89.62</text>
<text x="376.30" y="252.80" font-size="8.4" textLength="9.20" lengthAdjust="spacingAndGlyphs" fill="#1c1c1c" stroke="#1c1c1c" stroke-width="0.05" font-family="Liberation Sans" >25</text>
<text x="306.00" y="265.70" font-size="8.4" textLength="4.20" lengthAdjust="spacingAndGlyphs" fill="#1c1c1c" stroke="#1c1c1c" stroke-width="0.05" font-family="Liberation Sans" >$</text>
<text x="350.60" y="265.70" font-size="8.4" textLength="32.20" lengthAdjust="spacingAndGlyphs" fill="#1c1c1c" stroke="#1c1c1c" stroke-width="0.05" font-family="Liberation Sans" >2,240.50</text>
<text x="306.00" y="290.00" font-size="8.4" textLength="4.20" lengthAdjust="spacingAndGlyphs" fill="#1c1c1c" stroke="#1c1c1c" stroke-width="0.05" font-family="Liberation Sans" >$</text>
<text x="350.60" y="290.00" font-size="8.4" textLength="32.20" lengthAdjust="spacingAndGlyphs" fill="#1c1c1c" stroke="#1c1c1c" stroke-width="0.05" font-family="Liberation Sans" >2,240.50</text>
<text x="376.30" y="302.50" font-size="8.4" textLength="9.20" lengthAdjust="spacingAndGlyphs" fill="#1c1c1c" stroke="#1c1c1c" stroke-width="0.05" font-family="Liberation Sans" >31</text>
<text x="306.00" y="315.20" font-size="8.4" textLength="4.20" lengthAdjust="spacingAndGlyphs" fill="#444" stroke="#444" stroke-width="0.05" font-family="Liberation Sans" >$</text>
<text x="346.00" y="315.20" font-size="8.4" textLength="36.80" lengthAdjust="spacingAndGlyphs" fill="#444" stroke="#444" stroke-width="0.05" font-family="Liberation Sans" >69,455.50</text>
<text x="356.90" y="327.70" font-size="7.2" font-weight="bold" textLength="28.60" lengthAdjust="spacingAndGlyphs" fill="#111" stroke="#111" stroke-width="0.05" font-family="Liberation Sans" >0.11166</text>
<text x="307.50" y="343.70" font-size="10.6" textLength="5.20" lengthAdjust="spacingAndGlyphs" fill="#1c1c1c" stroke="#1c1c1c" stroke-width="0.05" font-family="Liberation Sans" >$</text>
<text x="339.30" y="343.70" font-size="10.6" textLength="41.70" lengthAdjust="spacingAndGlyphs" fill="#1c1c1c" stroke="#1c1c1c" stroke-width="0.05" font-family="Liberation Sans" >7,755.40</text>
<text x="475.80" y="166.30" font-size="8.4" textLength="20.70" lengthAdjust="spacingAndGlyphs" fill="#1c1c1c" stroke="#1c1c1c" stroke-width="0.05" font-family="Liberation Sans" >1.425</text>
<text x="475.80" y="178.60" font-size="8.4" textLength="20.70" lengthAdjust="spacingAndGlyphs" fill="#1c1c1c" stroke="#1c1c1c" stroke-width="0.05" font-family="Liberation Sans" >2.375</text>
<text x="491.90" y="190.90" font-size="8.4" textLength="4.60" lengthAdjust="spacingAndGlyphs" fill="#1c1c1c" stroke="#1c1c1c" stroke-width="0.05" font-family="Liberation Sans" >2</text>
<text x="475.80" y="203.20" font-size="8.4" textLength="20.70" lengthAdjust="spacingAndGlyphs" fill="#1c1c1c" stroke="#1c1c1c" stroke-width="0.05" font-family="Liberation Sans" >6.456</text>
<text x="470.38" y="215.70" font-size="8.4" font-weight="bold" textLength="26.12" lengthAdjust="spacingAndGlyphs" fill="#111" stroke="#111" stroke-width="0.05" font-family="Liberation Sans" >12.256</text>
<text x="417.00" y="240.50" font-size="8.4" textLength="4.20" lengthAdjust="spacingAndGlyphs" fill="#1c1c1c" stroke="#1c1c1c" stroke-width="0.05" font-family="Liberation Sans" >$</text>
<text x="473.10" y="240.50" font-size="8.4" textLength="20.70" lengthAdjust="spacingAndGlyphs" fill="#1c1c1c" stroke="#1c1c1c" stroke-width="0.05" font-family="Liberation Sans" >89.62</text>
<text x="487.30" y="252.80" font-size="8.4" textLength="9.20" lengthAdjust="spacingAndGlyphs" fill="#1c1c1c" stroke="#1c1c1c" stroke-width="0.05" font-family="Liberation Sans" >25</text>
<text x="417.00" y="265.70" font-size="8.4" textLength="4.20" lengthAdjust="spacingAndGlyphs" fill="#1c1c1c" stroke="#1c1c1c" stroke-width="0.05" font-family="Liberation Sans" >$</text>
<text x="461.60" y="265.70" font-size="8.4" textLength="32.20" lengthAdjust="spacingAndGlyphs" fill="#1c1c1c" stroke="#1c1c1c" stroke-width="0.05" font-family="Liberation Sans" >2,240.50</text>
<text x="417.00" y="290.00" font-size="8.4" textLength="4.20" lengthAdjust="spacingAndGlyphs" fill="#1c1c1c" stroke="#1c1c1c" stroke-width="0.05" font-family="Liberation Sans" >$</text>
<text x="461.60" y="290.00" font-size="8.4" textLength="32.20" lengthAdjust="spacingAndGlyphs" fill="#1c1c1c" stroke="#1c1c1c" stroke-width="0.05" font-family="Liberation Sans" >2,240.50</text>
<text x="487.30" y="302.50" font-size="8.4" textLength="9.20" lengthAdjust="spacingAndGlyphs" fill="#1c1c1c" stroke="#1c1c1c" stroke-width="0.05" font-family="Liberation Sans" >31</text>
<text x="417.00" y="315.20" font-size="8.4" textLength="4.20" lengthAdjust="spacingAndGlyphs" fill="#444" stroke="#444" stroke-width="0.05" font-family="Liberation Sans" >$</text>
<text x="457.00" y="315.20" font-size="8.4" textLength="36.80" lengthAdjust="spacingAndGlyphs" fill="#444" stroke="#444" stroke-width="0.05" font-family="Liberation Sans" >69,455.50</text>
<text x="467.90" y="327.70" font-size="7.2" font-weight="bold" textLength="28.60" lengthAdjust="spacingAndGlyphs" fill="#111" stroke="#111" stroke-width="0.05" font-family="Liberation Sans" >0.12256</text>
<text x="418.50" y="343.70" font-size="10.6" textLength="5.20" lengthAdjust="spacingAndGlyphs" fill="#1c1c1c" stroke="#1c1c1c" stroke-width="0.05" font-family="Liberation Sans" >$</text>
<text x="450.30" y="343.70" font-size="10.6" textLength="41.70" lengthAdjust="spacingAndGlyphs" fill="#1c1c1c" stroke="#1c1c1c" stroke-width="0.05" font-family="Liberation Sans" >8,512.47</text>
<text x="587.20" y="166.30" font-size="8.4" textLength="20.70" lengthAdjust="spacingAndGlyphs" fill="#1c1c1c" stroke="#1c1c1c" stroke-width="0.05" font-family="Liberation Sans" >1.425</text>
<text x="587.20" y="178.60" font-size="8.4" textLength="20.70" lengthAdjust="spacingAndGlyphs" fill="#1c1c1c" stroke="#1c1c1c" stroke-width="0.05" font-family="Liberation Sans" >2.375</text>
<text x="603.30" y="190.90" font-size="8.4" textLength="4.60" lengthAdjust="spacingAndGlyphs" fill="#1c1c1c" stroke="#1c1c1c" stroke-width="0.05" font-family="Liberation Sans" >2</text>
<text x="587.20" y="203.20" font-size="8.4" textLength="20.70" lengthAdjust="spacingAndGlyphs" fill="#1c1c1c" stroke="#1c1c1c" stroke-width="0.05" font-family="Liberation Sans" >7.546</text>
<text x="581.77" y="215.70" font-size="8.4" font-weight="bold" textLength="26.12" lengthAdjust="spacingAndGlyphs" fill="#111" stroke="#111" stroke-width="0.05" font-family="Liberation Sans" >13.346</text>
<text x="528.40" y="240.50" font-size="8.4" textLength="4.20" lengthAdjust="spacingAndGlyphs" fill="#1c1c1c" stroke="#1c1c1c" stroke-width="0.05" font-family="Liberation Sans" >$</text>
<text x="584.50" y="240.50" font-size="8.4" textLength="20.70" lengthAdjust="spacingAndGlyphs" fill="#1c1c1c" stroke="#1c1c1c" stroke-width="0.05" font-family="Liberation Sans" >89.62</text>
<text x="598.70" y="252.80" font-size="8.4" textLength="9.20" lengthAdjust="spacingAndGlyphs" fill="#1c1c1c" stroke="#1c1c1c" stroke-width="0.05" font-family="Liberation Sans" >25</text>
<text x="528.40" y="265.70" font-size="8.4" textLength="4.20" lengthAdjust="spacingAndGlyphs" fill="#1c1c1c" stroke="#1c1c1c" stroke-width="0.05" font-family="Liberation Sans" >$</text>
<text x="573.00" y="265.70" font-size="8.4" textLength="32.20" lengthAdjust="spacingAndGlyphs" fill="#1c1c1c" stroke="#1c1c1c" stroke-width="0.05" font-family="Liberation Sans" >2,240.50</text>
<text x="528.40" y="290.00" font-size="8.4" textLength="4.20" lengthAdjust="spacingAndGlyphs" fill="#1c1c1c" stroke="#1c1c1c" stroke-width="0.05" font-family="Liberation Sans" >$</text>
<text x="573.00" y="290.00" font-size="8.4" textLength="32.20" lengthAdjust="spacingAndGlyphs" fill="#1c1c1c" stroke="#1c1c1c" stroke-width="0.05" font-family="Liberation Sans" >2,240.50</text>
<text x="598.70" y="302.50" font-size="8.4" textLength="9.20" lengthAdjust="spacingAndGlyphs" fill="#1c1c1c" stroke="#1c1c1c" stroke-width="0.05" font-family="Liberation Sans" >31</text>
<text x="528.40" y="315.20" font-size="8.4" textLength="4.20" lengthAdjust="spacingAndGlyphs" fill="#444" stroke="#444" stroke-width="0.05" font-family="Liberation Sans" >$</text>
<text x="568.40" y="315.20" font-size="8.4" textLength="36.80" lengthAdjust="spacingAndGlyphs" fill="#444" stroke="#444" stroke-width="0.05" font-family="Liberation Sans" >69,455.50</text>
<text x="579.30" y="327.70" font-size="7.2" font-weight="bold" textLength="28.60" lengthAdjust="spacingAndGlyphs" fill="#111" stroke="#111" stroke-width="0.05" font-family="Liberation Sans" >0.13346</text>
<text x="529.90" y="343.70" font-size="10.6" textLength="5.20" lengthAdjust="spacingAndGlyphs" fill="#1c1c1c" stroke="#1c1c1c" stroke-width="0.05" font-family="Liberation Sans" >$</text>
<text x="561.70" y="343.70" font-size="10.6" textLength="41.70" lengthAdjust="spacingAndGlyphs" fill="#1c1c1c" stroke="#1c1c1c" stroke-width="0.05" font-family="Liberation Sans" >9,270.23</text>
<text x="39.30" y="381.30" font-size="8.1" textLength="166.50" lengthAdjust="spacingAndGlyphs" fill="#1c1c1c" stroke="#1c1c1c" stroke-width="0.05" font-family="Liberation Sans" >http://www.imss.gob.mx/tramites/imss02007</text>
<text x="39.30" y="418.20" font-size="8.1" textLength="63.60" lengthAdjust="spacingAndGlyphs" fill="#1c1c1c" stroke="#1c1c1c" stroke-width="0.05" font-family="Liberation Sans" >Art. 218- 221 LSS</text>
<text x="39.30" y="429.80" font-size="8.1" textLength="115.80" lengthAdjust="spacingAndGlyphs" fill="#1c1c1c" stroke="#1c1c1c" stroke-width="0.05" font-family="Liberation Sans" >Art 65. Reglamento de afiliación</text>
<rect x="412.60" y="506.60" width="86.20" height="12.40" fill="none" stroke="#1d6b37" stroke-width="1.3" />
<rect x="497.40" y="516.80" width="3.80" height="3.80" fill="#1d6b37" />
<rect x="496.60" y="515.60" width="1.00" height="1.20" fill="#ffffff" />
<rect x="2.00" y="566.00" width="598.00" height="17.60" fill="#efefef" />
<line x1="2.00" y1="566.30" x2="600.00" y2="566.30" stroke="#dadada" stroke-width="0.8" />
<path d="M12.6,575.2 L17.4,572 L17.4,578.4 Z" stroke="none" fill="#b8b8b8" stroke-width="1" />
<path d="M33.4,575.2 L28.6,572 L28.6,578.4 Z" stroke="none" fill="#b8b8b8" stroke-width="1" />
<line x1="44.50" y1="567.00" x2="44.50" y2="582.00" stroke="#d8d8d8" stroke-width="0.8" />
<rect x="46.70" y="568.30" width="104.90" height="12.70" fill="#ffb300" />
<text x="58.00" y="577.50" font-size="8.4" textLength="83.40" lengthAdjust="spacingAndGlyphs" fill="#1a1a1a" stroke="#1a1a1a" stroke-width="0.15" font-family="Liberation Sans" >Pensión por Cesantía</text>
<rect x="156.70" y="568.30" width="49.30" height="12.70" fill="#ffb300" />
<text x="165.40" y="577.50" font-size="8.4" textLength="32.00" lengthAdjust="spacingAndGlyphs" fill="#1a1a1a" stroke="#1a1a1a" stroke-width="0.15" font-family="Liberation Sans" >SBProm</text>
<line x1="206.50" y1="567.00" x2="206.50" y2="582.00" stroke="#d8d8d8" stroke-width="0.8" />
<text x="220.40" y="577.50" font-size="8.4" textLength="36.00" lengthAdjust="spacingAndGlyphs" fill="#555" stroke="#555" stroke-width="0.15" font-family="Liberation Sans" >Tabla 167</text>
<line x1="270.20" y1="567.00" x2="270.20" y2="582.00" stroke="#d8d8d8" stroke-width="0.8" />
<rect x="271.70" y="568.30" width="73.30" height="12.70" fill="#c00000" />
<text x="281.60" y="577.50" font-size="8.4" font-weight="bold" textLength="54.60" lengthAdjust="spacingAndGlyphs" fill="#ffffff" stroke="#ffffff" stroke-width="0.05" font-family="Liberation Sans" >Pensión Vejez</text>
<rect x="350.70" y="568.30" width="58.30" height="12.70" fill="#c00000" />
<text x="360.40" y="577.50" font-size="8.4" font-weight="bold" textLength="39.00" lengthAdjust="spacingAndGlyphs" fill="#ffffff" stroke="#ffffff" stroke-width="0.05" font-family="Liberation Sans" >SBP Vejez</text>
<rect x="410.80" y="565.60" width="79.20" height="16.40" fill="#ffffff" />
<line x1="411.00" y1="565.60" x2="411.00" y2="582.00" stroke="#d8d8d8" stroke-width="0.7" />
<line x1="490.00" y1="565.60" x2="490.00" y2="582.60" stroke="#c8c8c8" stroke-width="0.9" />
<line x1="411.00" y1="582.20" x2="490.20" y2="582.20" stroke="#d0d0d0" stroke-width="0.8" />
<defs><linearGradient id="tg" x1="0" y1="0" x2="0" y2="1"><stop offset="0" stop-color="#eef8e6"/><stop offset="1" stop-color="#c0e3aa"/></linearGradient></defs>
<rect x="413.30" y="568.30" width="73.50" height="11.10" fill="url(#tg)" />
<text x="423.80" y="577.40" font-size="8.4" font-weight="bold" textLength="53.20" lengthAdjust="spacingAndGlyphs" fill="#217a3a" font-family="Liberation Sans" >Modalidad 40</text>
<path d="M499.6,575.2 L507.0,575.2 M503.3,571.5 L503.3,578.9" stroke="#333" fill="none" stroke-width="1.1" />
<line x1="516.70" y1="567.00" x2="516.70" y2="582.00" stroke="#d8d8d8" stroke-width="0.8" />
<defs><linearGradient id="sg" x1="0" y1="0" x2="0" y2="1"><stop offset="0" stop-color="#e6e6e6"/><stop offset="1" stop-color="#d2d2d2"/></linearGradient></defs>
<path d="M2,583.8 L600,583.8 L600,600 L9,600 Q2,600 2,593 Z" stroke="none" fill="url(#sg)" stroke-width="1" />
<line x1="2.00" y1="583.60" x2="600.00" y2="583.60" stroke="#cdcdcd" stroke-width="1.0" />
<text x="18.80" y="594.60" font-size="8.4" textLength="18.50" lengthAdjust="spacingAndGlyphs" fill="#555" font-family="Liberation Sans" >Listo</text>
<rect x="508.30" y="584.10" width="25.90" height="15.90" fill="#bababa" />
<rect x="515.80" y="586.70" width="10.00" height="10.00" fill="#ffffff" rx="1.2" />
<line x1="519.13" y1="587.20" x2="519.13" y2="596.20" stroke="#9a9a9a" stroke-width="0.8" />
<line x1="516.30" y1="590.03" x2="525.30" y2="590.03" stroke="#9a9a9a" stroke-width="0.8" />
<line x1="522.47" y1="587.20" x2="522.47" y2="596.20" stroke="#9a9a9a" stroke-width="0.8" />
<line x1="516.30" y1="593.37" x2="525.30" y2="593.37" stroke="#9a9a9a" stroke-width="0.8" />
<rect x="541.60" y="586.80" width="9.40" height="9.80" fill="none" rx="1" stroke="#7a7a7a" stroke-width="0.9" />
<rect x="543.80" y="588.60" width="5.00" height="6.20" fill="none" stroke="#7a7a7a" stroke-width="0.8" />
<rect x="566.00" y="586.80" width="9.80" height="9.80" fill="none" rx="1" stroke="#7a7a7a" stroke-width="0.9" />
<path d="M569,586.8 L569,590.6 L572.8,590.6 L572.8,586.8" stroke="#7a7a7a" fill="none" stroke-width="0.8" />
<line x1="588.40" y1="591.40" x2="594.20" y2="591.40" stroke="#444" stroke-width="1.3" />
<line x1="598.60" y1="591.40" x2="600.00" y2="591.40" stroke="#444" stroke-width="1.3" />
<line x1="1.70" y1="6.00" x2="1.70" y2="595.00" stroke="#8e8e8e" stroke-width="0.8" />
</svg>
</body></html>
